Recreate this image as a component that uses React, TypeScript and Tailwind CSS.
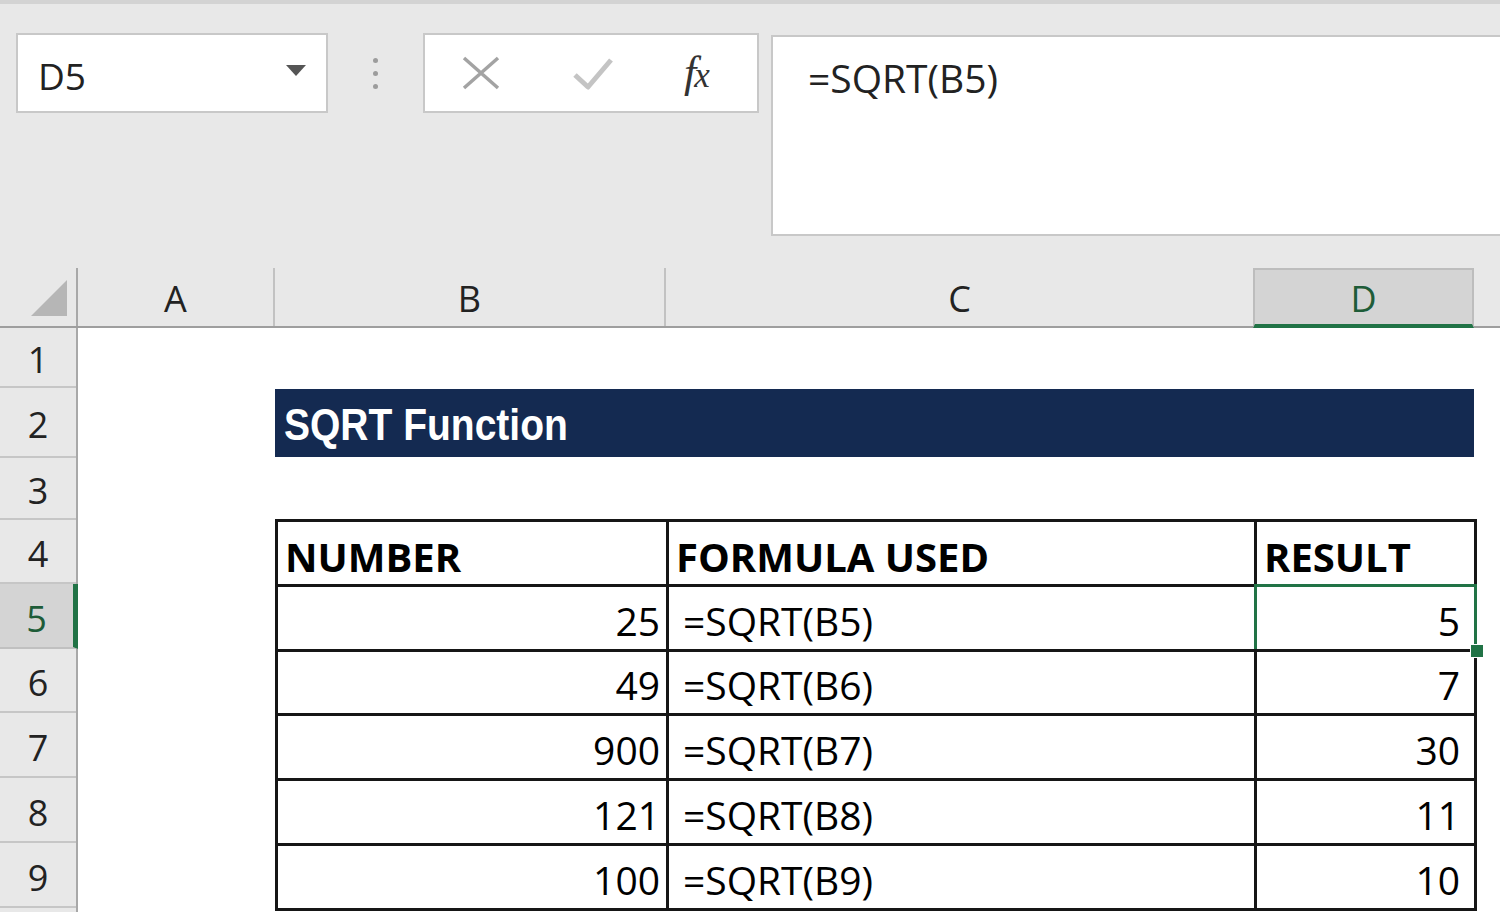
import React from 'react';

const ui = "font-['Open_Sans','Liberation_Sans',sans-serif]";

const rows = [
  { n: '25', f: '=SQRT(B5)', r: '5', h: 'h-[65px]', sel: true },
  { n: '49', f: '=SQRT(B6)', r: '7', h: 'h-[64px]', sel: false },
  { n: '900', f: '=SQRT(B7)', r: '30', h: 'h-[65px]', sel: false },
  { n: '121', f: '=SQRT(B8)', r: '11', h: 'h-[65px]', sel: false },
  { n: '100', f: '=SQRT(B9)', r: '10', h: 'h-[65px]', sel: false },
];

const rowHeaders = [
  { label: '1', h: 'h-[60px]' },
  { label: '2', h: 'h-[70px]' },
  { label: '3', h: 'h-[62px]' },
  { label: '4', h: 'h-[64px]' },
  { label: '5', h: 'h-[65px]' },
  { label: '6', h: 'h-[64px]' },
  { label: '7', h: 'h-[65px]' },
  { label: '8', h: 'h-[65px]' },
  { label: '9', h: 'h-[65px]' },
];

function NameBox() {
  return (
    <div className="w-[312px] h-[80px] bg-white border-2 border-[#c8c8c8] flex items-center justify-between pl-[20px] pr-[20px]">
      <span className="text-[37px] leading-none text-[#222] pt-[4px]">D5</span>
      <svg width="20" height="12" viewBox="0 0 20 12" className="-mt-[4px]">
        <polygon points="0,0 20,0 10,11" fill="#555" />
      </svg>
    </div>
  );
}

function FormulaButtons() {
  return (
    <div className="w-[336px] h-[80px] bg-white border-2 border-[#c8c8c8] flex items-center pl-[37px]">
      <svg width="38" height="34" viewBox="0 0 38 34">
        <path d="M2 2 L36 32 M36 2 L2 32" stroke="#a3a3a3" strokeWidth="3.5" fill="none" />
      </svg>
      <svg width="42" height="36" viewBox="0 0 42 36" className="ml-[72px]">
        <path d="M3 20 L16 32 L39 5" stroke="#c4c4c4" strokeWidth="5" fill="none" strokeLinejoin="round" />
      </svg>
      <span className="ml-[70px] font-['Liberation_Serif',serif] italic text-[44px] leading-none text-[#333] tracking-[-2px]">
        f<span className="text-[35px]">x</span>
      </span>
    </div>
  );
}

export default function App() {
  return (
    <div className={`w-[1500px] h-[912px] overflow-hidden bg-[#e8e8e8] flex flex-col ${ui}`}>
      <div className="h-[4px] shrink-0 bg-[#d3d3d3]" />

      {/* formula bar */}
      <div className="flex shrink-0 items-start mt-[29px]">
        <div className="ml-[16px]">
          <NameBox />
        </div>
        <div className="w-[95px] h-[80px] flex flex-col items-center justify-center gap-[8px]">
          <div className="w-[5px] h-[5px] rounded-full bg-[#9c9c9c]" />
          <div className="w-[5px] h-[5px] rounded-full bg-[#9c9c9c]" />
          <div className="w-[5px] h-[5px] rounded-full bg-[#9c9c9c]" />
        </div>
        <FormulaButtons />
        <div className="ml-[12px] mt-[2px] flex-1 h-[201px] bg-white border-l-2 border-t-2 border-b-2 border-[#c8c8c8] pl-[35px] pt-[16px]">
          <span className="text-[39px] leading-[50px] text-[#222]">=SQRT(B5)</span>
        </div>
      </div>

      {/* column headers */}
      <div className="mt-[32px] h-[60px] shrink-0 flex border-b-2 border-[#9e9e9e] text-[36px] text-[#222]">
        <div className="w-[78px] border-r-2 border-[#a8a8a8] flex items-end justify-end pr-[9px] pb-[10px]">
          <svg width="36" height="36" viewBox="0 0 36 36">
            <polygon points="36,0 36,36 0,36" fill="#b6b6b6" />
          </svg>
        </div>
        <div className="w-[197px] border-r-2 border-[#c2c2c2] flex items-center justify-center pt-[4px]">A</div>
        <div className="w-[391px] border-r-2 border-[#c2c2c2] flex items-center justify-center pt-[4px]">B</div>
        <div className="w-[587px] flex items-center justify-center pt-[4px]">C</div>
        <div className="w-[221px] bg-[#d4d4d4] border-l-2 border-r-2 border-t-2 border-[#bdbdbd] border-b-[4px] border-b-[#217346] -mb-[2px] flex items-center justify-center pt-[4px] text-[#1e5c38]">
          D
        </div>
        <div className="flex-1" />
      </div>

      {/* sheet */}
      <div className="flex flex-1 min-h-0">
        <div className="w-[78px] flex flex-col border-r-2 border-[#a8a8a8]">
          {rowHeaders.map((r) => (
            <div
              key={r.label}
              className={`${r.h} shrink-0 flex items-center justify-center pt-[6px] border-b-2 text-[36px] ${
                r.label === '5'
                  ? 'bg-[#d4d4d4] border-[#c0c0c0] text-[#1e5c38] -mr-[2px] border-r-[5px] border-r-[#217346]'
                  : 'border-[#c6c6c6] text-[#222]'
              }`}
            >
              {r.label}
            </div>
          ))}
        </div>

        <div className="flex-1 bg-white flex flex-col">
          <div className="h-[60px] shrink-0" />
          <div className="h-[70px] shrink-0 pl-[197px] pr-[26px] py-[1px]">
            <div className="h-full bg-[#142a51] flex items-center pl-[9px] pt-[2px]">
              <span className="inline-block scale-y-[1.15] font-['Liberation_Sans',Arial,sans-serif] font-bold text-[39px] text-white leading-none">
                SQRT Function
              </span>
            </div>
          </div>
          <div className="h-[61px] shrink-0" />

          <div className="ml-[197px] w-[1202px] shrink-0 border-r-[3px] border-b-[3px] border-[#161616] text-black">
            <div className="h-[65px] flex font-bold text-[40px]">
              <div className="w-[391px] border-l-[3px] border-t-[3px] border-[#161616] flex items-center pl-[7px] pt-[8px]">
                NUMBER
              </div>
              <div className="w-[588px] border-l-[3px] border-t-[3px] border-[#161616] flex items-center pl-[7px] pt-[8px]">
                FORMULA USED
              </div>
              <div className="w-[220px] border-l-[3px] border-t-[3px] border-[#161616] flex items-center pl-[7px] pt-[8px]">
                RESULT
              </div>
            </div>
            {rows.map((row) => (
              <div key={row.f} className={`${row.h} flex text-[39px]`}>
                <div className="w-[391px] border-l-[3px] border-t-[3px] border-[#161616] flex items-center justify-end pr-[6px] pt-[6px]">
                  {row.n}
                </div>
                <div className="w-[588px] border-l-[3px] border-t-[3px] border-[#161616] flex items-center pl-[14px] pt-[6px]">
                  {row.f}
                </div>
                <div className="relative w-[220px] border-l-[3px] border-t-[3px] border-[#161616] flex items-center justify-end pr-[14px] pt-[6px]">
                  {row.r}
                  {row.sel && (
                    <>
                      <div className="absolute -left-[3px] -top-[3px] -right-[3px] -bottom-[3px] border-[3px] border-[#217346]" />
                      <div className="absolute z-10 -right-[10px] -bottom-[9px] w-[14px] h-[14px] bg-[#217346] border border-white" />
                    </>
                  )}
                </div>
              </div>
            ))}
          </div>
        </div>
      </div>
    </div>
  );
}
